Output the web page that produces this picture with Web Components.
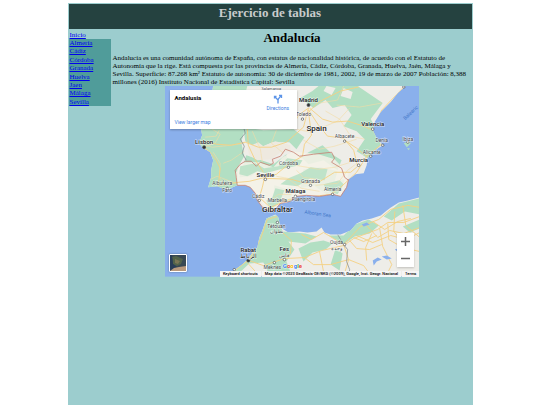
<!DOCTYPE html>
<html lang="es">
<head>
<meta charset="utf-8">
<title>Ejercicio de tablas</title>
<style>
html{background:#fff}
body{margin:0;font:7px/8px "Liberation Serif",serif;color:#000}
</style>
</head>
<body>
<tablas-page></tablas-page>
<script>
class BaseElement extends HTMLElement{
  constructor(){super();this.attachShadow({mode:"open"}).innerHTML=this.constructor.html;}
}
customElements.define("site-header",class extends BaseElement{
  static html=`<style>
  :host{display:block;background:#254240;color:#c9cccc;text-align:center;padding-bottom:8px}
  h1{margin:0;font-size:13px;line-height:17px}
  </style><h1><slot></slot></h1>`;
});
customElements.define("province-nav",class extends BaseElement{
  static html=`<style>
  :host{display:block}
  nav{padding-top:2px}
  a{color:#0000ee;text-decoration:underline}
  .home{display:block;padding-left:1px;line-height:8px}
  ul{list-style:none;margin:0;padding:0 0 0 1px;height:67px;background:#509c9a;display:grid;grid-auto-rows:1fr;line-height:8px}
  </style><nav><a class="home" href="#inicio">Inicio</a><ul>
  ${["Almería","Cádiz","Córdoba","Granada","Huelva","Jaen","Málaga","Sevilla"].map(n=>`<li><a href="#${n}">${n}</a></li>`).join("")}
  </ul></nav>`;
});
customElements.define("map-canvas",class extends BaseElement{
  static html=`<style>
  :host{display:block}
  svg{display:block;width:100%;height:auto;font-family:Roboto,sans-serif}
  .road{fill:none;stroke:#f4d083;stroke-width:.9}
  .minor{fill:none;stroke:#f3dca5;stroke-width:.6}
  .green{fill:#b2dfc3}
  .edge{fill:none;stroke:#c77f72;stroke-width:.8}
  .gray{fill:none;stroke:#818991;stroke-width:.7}
  text{fill:#45494d;font-size:5px;text-anchor:middle;paint-order:stroke;stroke:#fff;stroke-width:1px;stroke-opacity:.65}
  .city{font-size:6px;fill:#202124;font-weight:500}
  .big{font-size:8px;font-weight:500;fill:#202124}
  .tiny{font-size:4px}
  .sea{fill:#4277c9;stroke:none}
  .dot circle{fill:#fff;stroke:#4c5053;stroke-width:.7}
  .logo{font-size:6px;font-weight:700}
  </style>
  <svg viewBox="165 86 254 190" role="img" aria-label="Mapa de Andalucía">
  <defs>
  <clipPath id="iberia"><path d="M213 86L210 103L206 115L201 129L202 135L199 143L203 148L207 150L210 152L213 160L211 170L211 177L208 187L217 186L222 188L228 189L237 185L245 185L250 187L255 193L257 200L263 208L269 211L274 210L280 203L290 201L295 196L306 195L319 196L332 194L340 196L346 187L348 179L355 174L363 173L366 165L367 158L373 151L382 145L376 138L372 130L374 122L380 112L390 102L397 93L405 86Z"/></clipPath>
  <clipPath id="africa"><path d="M230 276L235 269L242 264L248 258L253 251L257 247L259 237L262 230L266 218L275 214L278 217L280 227L288 232L299 231L307 232L316 231L321 227L324 232L330 234L340 234L350 230L356 223L362 220L371 218L380 215L386 210L390 207L398 202L407 200L419 197V276Z"/></clipPath>
  </defs>
  <rect x="165" y="86" width="254" height="190" fill="#8ab0ec"/>
  <g clip-path="url(#iberia)">
   <rect x="190" y="86" width="220" height="128" fill="#eeede8"/>
   <path class="green" d="M195 86H247L243 102L245 127L241 142L244 156L237 168L238 188H200ZM243 127L263 130L293 129L304 137L296 149L289 142L272 142L258 148L245 141ZM246 155L264 161L273 164L286 154L288 164L272 170L260 166L251 176L239 177ZM318 86H357L382 103L370 119L377 132L380 145L367 158L356 151L364 139L356 131L343 126L351 115L344 105L332 108L325 100L313 108L300 98L312 91ZM308 152L322 145L333 155L341 160L337 170L323 160L308 164L301 157ZM303 169L320 167L337 171L334 181L344 179L341 191L326 194L313 185L300 188ZM274 185L284 188L292 187L291 200L278 204L270 210L266 201L273 198Z"/>
   <path fill="#eee9df" d="M247 147L258 142L263 146L275 141L290 145L290 151L280 152L271 159L257 160L249 155Z"/>
   <path fill="#eeede8" d="M343 88L352 92L350 99L340 96ZM326 86L335 88L331 95L323 91ZM370 90L385 88L381 97Z"/>
   <path fill="#f5f2e8" opacity=".85" d="M237 185L235 173L243 162L259 162L273 167L282 157L293 151L318 154L334 159L348 174L340 196L295 197L267 211L253 191Z"/>
   <path fill="#bfe3c9" d="M240 166L255 163L264 168L278 166L287 158L302 160L299 165L280 169L265 173L257 171L247 176L239 174ZM300 173L310 167L327 169L324 180L310 178L297 186L280 184L288 178ZM275 188L284 190L279 202L270 209L266 200L272 197ZM323 184L339 180L343 184L337 194L326 190Z"/>
   <path class="minor" d="M204 147L215 143L220 134L212 129M205 137L216 136L219 130M203 144L212 147L231 145L244 143M213 152L220 163L219 177L226 186M208 180L217 176L236 183M223 163L231 160L244 151M252 131L260 149L262 162M276 130L271 143L283 153M268 202L278 194L291 194M303 140L319 149L334 146L356 139M296 129L310 132L337 121L349 108M336 105L359 107L381 103M343 86L337 100L319 103M325 111L339 119L350 136L364 139M295 165L318 169L334 167L350 162M315 185L337 183L347 170L355 164M276 176L287 178L301 188L319 191M296 170L303 177L316 179"/>
   <path class="road" d="M204 147L211 153L216 160L220 168L218 186M206 141L216 144L231 145L245 142L258 147L271 147L286 142L303 127L308 108M219 185L238 182L249 181L265 177L276 174L288 164L302 156L304 144L311 135L308 112L318 102L340 91L358 87M309 108L322 119L332 122L347 121L363 126L372 130L381 110L402 88M308 108L298 115L291 129M308 110L318 125L327 136L343 138L353 150L357 166L350 172L334 172L318 182L305 183L291 179L264 178L262 187L259 197L270 207L289 199L330 194L340 187L356 172L366 156L381 144L372 130M344 140L356 148L367 157M263 172L254 158L248 145L247 128"/>
   <path class="gray" d="M243 126L245 133L240 139L244 146L242 153L246 160"/>
   <path class="edge" d="M237 185L236 177L235 170L240 164L245 161L251 161L256 166L260 162L269 165L273 163L272 159L280 156L285 149L293 152L299 156L313 154L331 152L334 158L331 162L341 168L344 177L348 180"/>
  </g>
  <path class="edge" d="M237 185L245 185L250 187L255 193L257 200L263 208L269 211L274 210L280 203L290 201L295 196L306 195L319 196L332 194L340 196L346 187L348 179"/>
  <g clip-path="url(#africa)">
   <rect x="225" y="195" width="194" height="81" fill="#eeede8"/>
   <path class="green" d="M261 218L279 214L282 231L305 233L316 236L305 243L288 241L294 249L286 261L292 276H270L263 262L249 263L235 276H225ZM298 248L310 242L323 240L332 243L325 249L312 252L303 261ZM328 235L343 235L354 224L368 219L378 225L369 233L354 236L343 244ZM383 216L398 203L419 198V214L404 211L391 220ZM402 226L419 219V228L409 232ZM335 248L342 253L339 270L330 264Z"/>
   <path class="road" d="M233 271L249 259L260 239L267 219L277 216M249 260L263 265L284 258L304 257L321 250L343 245L353 238L366 233L377 229L387 222L403 222L419 216M247 262L257 273M282 232L291 240L290 253L284 260M301 234L311 239L323 232L333 238L343 244L348 259L343 276M304 257L313 264L330 264L348 259L363 265L371 276M319 251L324 276M343 244L360 226L378 219L390 209L407 205L419 207M356 235L372 242L390 235L405 239L419 232M365 224L377 237L389 230L403 233L419 227M372 221L384 229L397 221L410 218M379 228L382 246L391 264L385 276M371 233L365 247L366 260M387 223L388 239L402 247L419 251M394 211L393 231L404 244L408 261M402 205L405 225L419 237M353 237L363 241L376 235M349 240L356 248L369 249L381 244"/>
   <path class="gray" d="M337 234L343 244L347 249L346 261L349 269L348 276"/>
   <path fill="#8ab0ec" d="M361 224L366 222L369 224L363 226ZM372 260L377 257L381 259L376 261L373 265ZM381 256L386 255L391 258L386 259ZM394 249L400 247L398 252Z"/>
  </g>
  <path class="green" d="M403 143L408 141L410 143L406 147ZM406 148L409 148L408 150Z"/>
  <g class="dot"><circle cx="204" cy="147" r="1.5" style="fill:#303234"/><circle cx="308" cy="105" r="1.5" style="fill:#303234"/><circle cx="248" cy="260" r="1.5" style="fill:#303234"/><circle cx="265" cy="179" r="1.3"/><circle cx="288" cy="167" r="1.2"/><circle cx="310" cy="185" r="1.2"/><circle cx="295" cy="196" r="1.3"/><circle cx="332" cy="194" r="1.2"/><circle cx="227" cy="188" r="1.2"/><circle cx="259" cy="200" r="1.2"/><circle cx="358" cy="165" r="1.3"/><circle cx="370" cy="156" r="1.2"/><circle cx="382" cy="145" r="1.2"/><circle cx="372" cy="129" r="1.3"/><circle cx="344" cy="141" r="1.2"/><circle cx="407" cy="142" r="1.2"/><circle cx="302" cy="119" r="1.2"/><circle cx="277" cy="222" r="1.2"/><circle cx="284" cy="259" r="1.3"/><circle cx="344" cy="244" r="1.2"/><circle cx="274" cy="262" r="1.2"/><circle cx="403" cy="87" r="1.2"/><circle cx="234" cy="269" r="1.2"/></g>
  <text class="tiny" x="271" y="90">Salamanca</text>
  <text class="city" x="308" y="102">Madrid</text><text x="303" y="116">Toledo</text>
  <text class="big" x="316" y="131">Spain</text>
  <text class="city" x="372" y="126">Valencia</text><text x="344" y="138">Albacete</text><text x="381" y="142">Denia</text><text x="407" y="141">Ibiza</text><text x="371" y="154">Alicante</text>
  <text class="city" x="358" y="162">Murcia</text><text class="city" x="204" y="144">Lisbon</text>
  <text x="288" y="165">Córdoba</text><text class="city" x="265" y="177">Seville</text><text x="310" y="183">Granada</text>
  <text class="city" x="295" y="193">Málaga</text><text x="332" y="191">Almería</text><text x="222" y="185">Albufeira</text><text x="227" y="192">Faro</text><text x="258" y="198">Cádiz</text><text x="277" y="202">Marbella</text><text x="303" y="201">Fuengirola</text>
  <text class="big" x="277" y="212">Gibraltar</text>
  <text class="sea" x="317" y="215" transform="rotate(8 317 215)">Alboran Sea</text><text class="sea" x="411" y="114" transform="rotate(-43 411 114)">Balearic</text>
  <text x="276" y="228">Tétouan</text><text x="276" y="233">تطوان</text>
  <text class="city" x="248" y="251">Rabat</text><text class="city" x="248" y="257">الرباط</text><text class="city" x="284" y="250">Fes</text><text x="284" y="256">فاس</text>
  <text x="336" y="243">Oujda</text><text x="336" y="249">وجدة</text><text x="272" y="268">Meknes</text>
  <text class="logo" x="292" y="267"><tspan fill="#4285f4">G</tspan><tspan fill="#ea4335">o</tspan><tspan fill="#fbbc04">o</tspan><tspan fill="#4285f4">g</tspan><tspan fill="#34a853">l</tspan><tspan fill="#ea4335">e</tspan></text>
  </svg>`;
});
customElements.define("google-map",class extends BaseElement{
  static html=`<style>
  :host{display:block;position:relative;width:71%;overflow:hidden;font-family:Roboto,sans-serif;line-height:8px}
  a{color:#3c7de0;text-decoration:none}
  .card{position:absolute;left:5px;top:4px;width:50%;height:39px;box-sizing:border-box;padding:4px 8px 3px 5px;background:#fff;box-shadow:0 1px 2px #0004;display:flex;justify-content:space-between;font-size:5px}
  .place{display:flex;flex-direction:column;justify-content:space-between}
  strong{font-size:6px;font-weight:700}
  .dir{display:flex;flex-direction:column;align-items:center;align-self:flex-start}
  .dir svg{width:10px;height:10px}
  .zoom{position:absolute;right:5px;bottom:10px;width:17px;background:#fff;box-shadow:0 1px 2px #0003}
  button{display:block;border:0;padding:0;margin:0;background:none;width:100%;height:17px;cursor:pointer}
  .zoom svg{display:block;margin:auto;width:9px;height:9px}
  .layer{position:absolute;left:4px;bottom:5px;width:18px;height:18px;box-sizing:border-box;border:1px solid #fff;border-radius:1px;box-shadow:0 0 2px #0006}
  .layer svg{display:block;width:100%;height:100%}
  .legal{position:absolute;right:0;bottom:0;display:flex;font-size:4px;font-weight:500;line-height:6px;white-space:nowrap;gap:1px}
  .legal>*{background:#f5f5f5;color:#000;padding:0 3px}
  .legal button{font:inherit;width:auto;height:6px;background:#f5f5f5;padding:0 3px}
  </style>
  <map-canvas></map-canvas>
  <div class="card"><div class="place"><strong>Andalusia</strong><a href="#map">View larger map</a></div>
  <a class="dir" href="#directions"><svg viewBox="0 0 20 20" fill="none" stroke="#5c94e8" stroke-width="2.6"><path d="M10 19V13Q10 10 13 7L16 4M10 12L4 6"/><path d="M12 3H17V8M3 9V5H7" /></svg>Directions</a></div>
  <button class="layer" aria-label="Satellite"><svg viewBox="0 0 16 16"><path fill="#384853" d="M0 0H16V16H0Z"/><path fill="#52634a" d="M2 2L6 1L13 4L11 9L7 11L3 9Z"/><path fill="#283d58" d="M0 0H2L3 9L7 12L0 16Z"/><path fill="#b99a7e" d="M0 16L4 13L9 12L16 11V16Z"/><path fill="#7b7655" d="M5 4L10 6L8 9L5 8Z"/></svg></button>
  <div class="zoom"><button aria-label="Zoom in"><svg viewBox="0 0 9 9"><path d="M4.5 0V9M0 4.5H9" stroke="#666" stroke-width="1.5"/></svg></button><button aria-label="Zoom out"><svg viewBox="0 0 9 9"><path d="M0 4.5H9" stroke="#666" stroke-width="1.5"/></svg></button></div>
  <div class="legal"><button>Keyboard shortcuts</button><span>Map data ©2023 GeoBasis-DE/BKG (©2009), Google, Inst. Geogr. Nacional</span><a href="#terms">Terms</a></div>`;
});
customElements.define("region-article",class extends BaseElement{
  static html=`<style>
  :host{display:flex;flex-direction:column;align-items:center;min-width:0}
  h2{margin:0;font-size:13px;line-height:18px}
  p{margin:7px 0 0;align-self:stretch;line-height:8px}
  </style><h2>Andalucía</h2><p>Andalucía es una comunidad autónoma de España, con estatus de nacionalidad histórica, de acuerdo con el Estatuto de Autonomía que la rige. Está compuesta por las provincias de Almería, Cádiz, Córdoba, Granada, Huelva, Jaén, Málaga y Sevilla. Superficie: 87.268 km² Estatuto de autonomía: 30 de diciembre de 1981, 2002, 19 de marzo de 2007 Población: 8,388 millones (2016) Instituto Nacional de Estadística Capital: Sevilla</p><google-map></google-map>`;
});
customElements.define("tablas-page",class extends BaseElement{
  static html=`<style>
  :host{display:block;box-sizing:border-box;width:75%;min-height:100vh;margin:0 auto;padding:4px 1px 0;background:linear-gradient(#fff 3px,#9ccdce 3px);}
  main{display:grid;grid-template-columns:42px minmax(0,1fr);column-gap:2px}
  </style><site-header>Ejercicio de tablas</site-header><main><province-nav></province-nav><region-article></region-article></main>`;
});
</script>
</body>
</html>
